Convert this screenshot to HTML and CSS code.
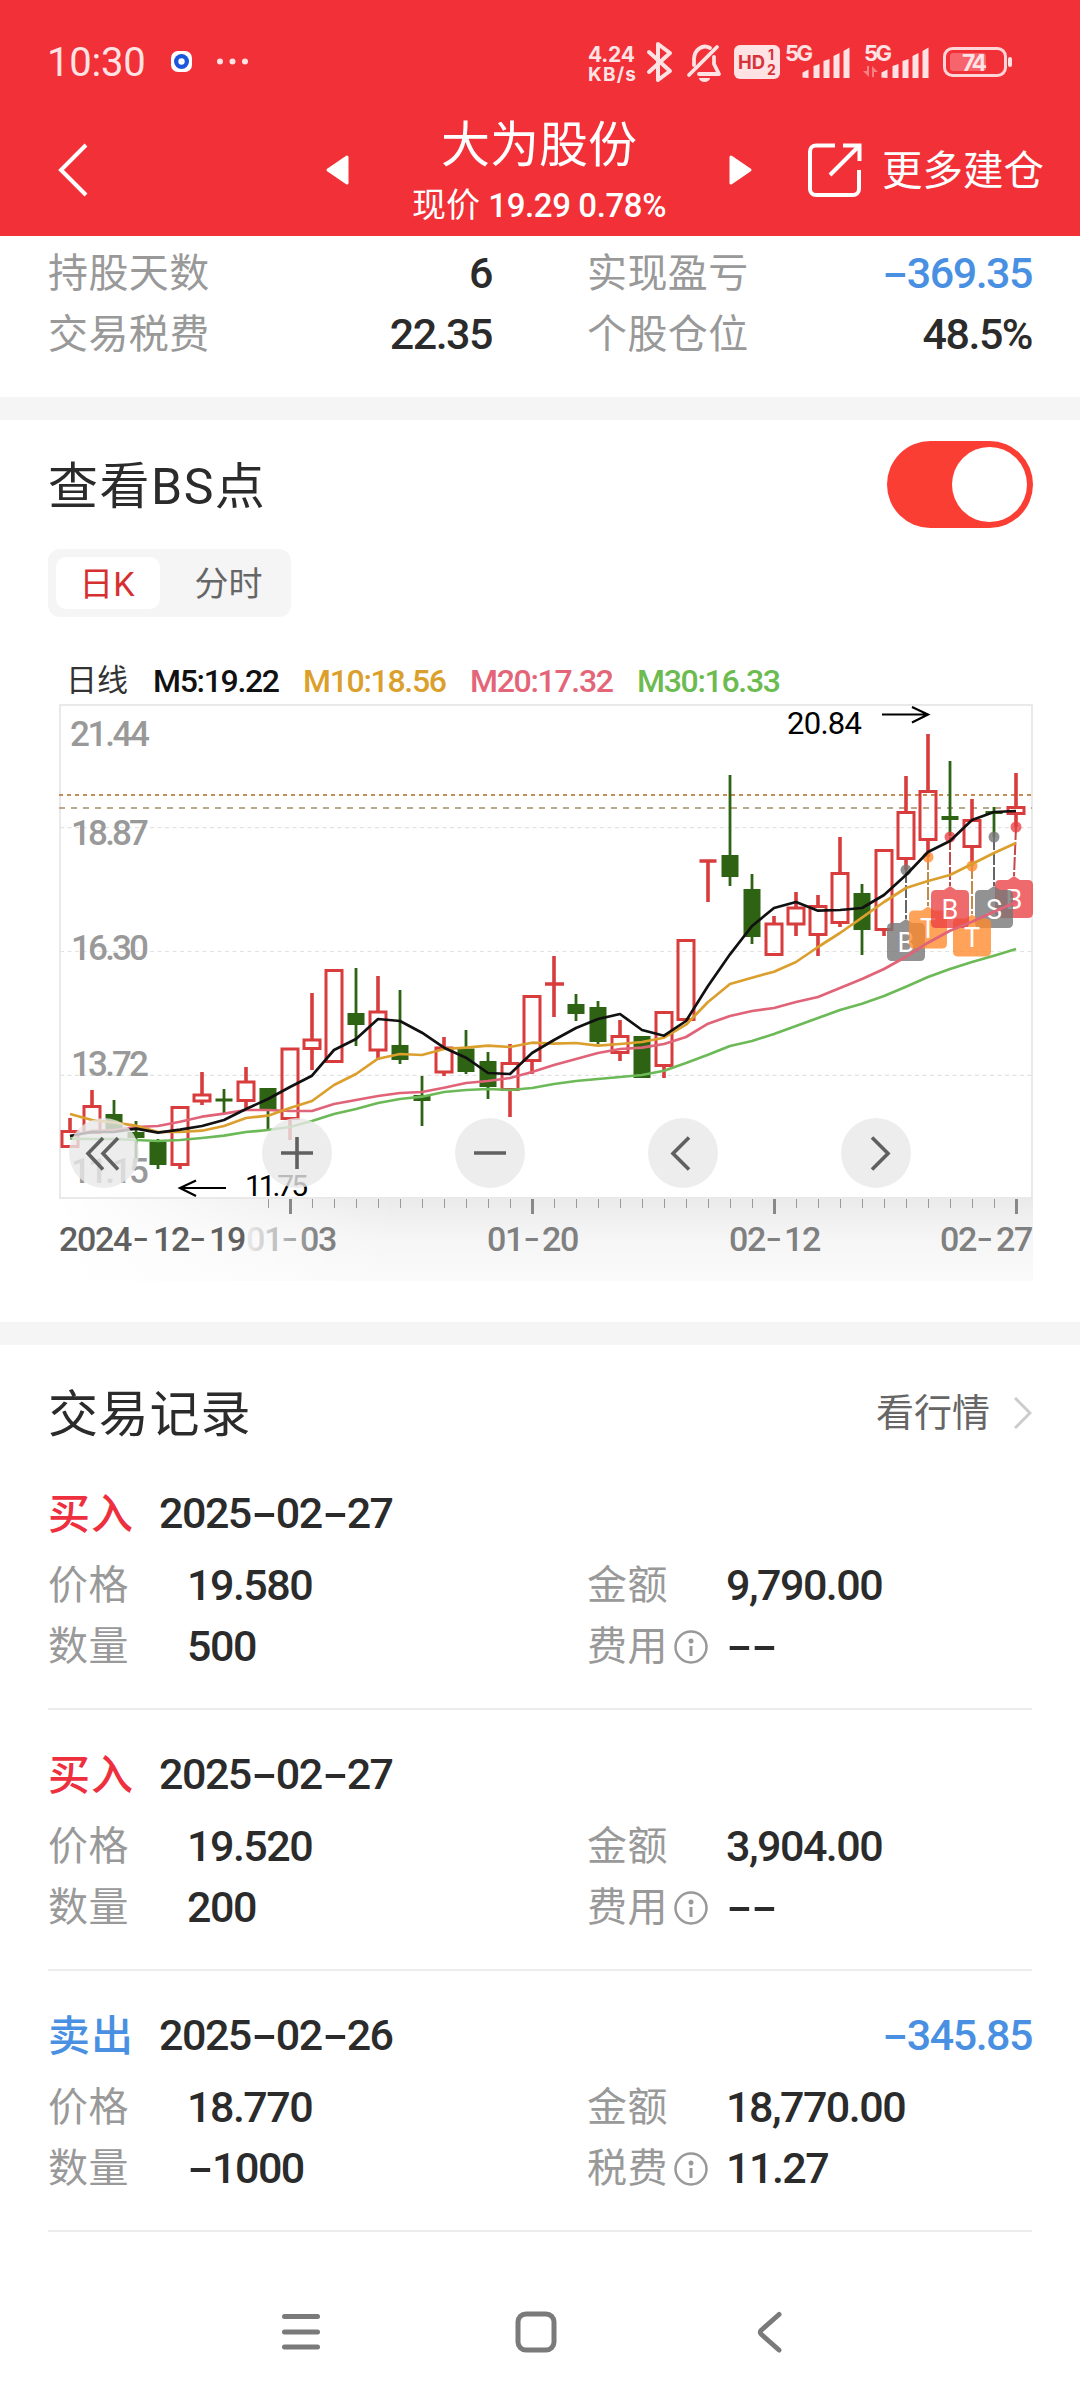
FILE: index.html
```html
<!DOCTYPE html>
<html lang="zh-CN">
<head>
<meta charset="utf-8">
<title>大为股份</title>
<link rel="stylesheet" href="styles.css">
</head>
<body>
<header class="header">
  <div class="statusbar">
    <span class="clock">10:30</span>
    <svg class="notif" width="80" height="24" viewBox="0 0 80 24">
      <rect x="0" y="1" width="21" height="21" rx="7" fill="#fff"/>
      <circle cx="10.500" cy="11.500" r="7.500" fill="#1c56dc"/>
      <circle cx="10.500" cy="11.500" r="3.200" fill="#fff"/>
      <g fill="#ffe2e3"><circle cx="49" cy="11.500" r="3"/><circle cx="61.500" cy="11.500" r="3"/><circle cx="74" cy="11.500" r="3"/></g>
    </svg>
    <svg class="signals" width="432" height="50" viewBox="584 36 432 50" fill="#ffe2e3">
      <g class="tiny">
        <text x="588" y="61" font-size="21" textLength="47">4.24</text>
        <text x="588" y="80" font-size="19" textLength="48">KB/s</text>
      </g>
      <path d="M649 51l21 19-12 9V43l12 9-21 19" fill="none" stroke="#ffe2e3" stroke-width="4" stroke-linejoin="round" stroke-linecap="round"/>
      <g fill="none" stroke="#ffe2e3" stroke-width="3.800" stroke-linecap="round" stroke-linejoin="round">
        <path d="M717 46l-28 28"/>
        <path d="M694 64V58a11 13 0 0 1 16-11"/>
        <path d="M714 56v7l5 10H699"/>
      </g>
      <path d="M699 77h11a5.500 4 0 0 1-11 0z"/>
      <rect x="734" y="44" width="46" height="34" rx="6"/>
      <g class="tiny" fill="#d8323a">
        <text x="738" y="68" font-size="19" textLength="27" lengthAdjust="spacingAndGlyphs">HD</text>
        <text x="768" y="59" font-size="14">1</text>
        <text x="767" y="74" font-size="14">2</text>
      </g>
      <g class="tiny" font-size="22"><text x="785" y="60" textLength="28">5G</text><text x="864" y="60" textLength="28">5G</text></g>
      <path d="M802.500 76.500v-5l6-3v8.500zM813.500 77V65l6-2v14zM823.500 77V60l6-2v19zM833.500 77V55l6-3v25zM843.500 77V50l6-3.500V77z"/>
      <path transform="translate(79 0)" d="M802.500 76.500v-5l6-3v8.500zM813.500 77V65l6-2v14zM823.500 77V60l6-2v19zM833.500 77V55l6-3v25zM843.500 77V50l6-3.500V77z"/>
      <path d="M869 65v11l-6-6h4v-5zM872 76V65l6 6h-4v5z" opacity=".45"/>
      <rect x="944.500" y="47.500" width="61" height="27" rx="8" fill="none" stroke="#ffd5d7" stroke-width="3"/>
      <rect x="950" y="52" width="36" height="18" rx="3" opacity=".3"/>
      <rect x="1008" y="56" width="4" height="10" rx="2"/>
      <text x="962" y="70" class="tiny" font-size="23" textLength="25">74</text>
    </svg>
  </div>
  <div class="titlebar">
    <svg class="back" width="32" height="54" viewBox="0 0 32 54" fill="none" stroke="#fff" stroke-width="4"><path d="M30 2L5 27l25 25"/></svg>
    <svg class="tri" width="24" height="30" viewBox="0 0 24 30"><path d="M21 2v26L2 15z" fill="#fff" stroke="#fff" stroke-width="3" stroke-linejoin="round"/></svg>
    <div class="name">
      <h1>大为股份</h1>
      <p>现价 <span>19.29 0.78%</span></p>
    </div>
    <svg class="tri" width="24" height="30" viewBox="0 0 24 30"><path d="M3 2v26l19-13z" fill="#fff" stroke="#fff" stroke-width="3" stroke-linejoin="round"/></svg>
    <svg class="share" width="54" height="54" viewBox="0 0 54 54" fill="none" stroke="#fff" stroke-width="4"><path d="M27 2.500H8a6 6 0 0 0-6 6V46a6 6 0 0 0 6 6h37a6 6 0 0 0 6-6V27M35 2.500h16.500V18M51 3L22 32"/></svg>
    <span class="more">更多建仓</span>
  </div>
</header>

<section class="stats">
  <span class="label">持股天数</span><span class="num end">6</span>
  <span class="label second">实现盈亏</span><span class="num end blue"><i>-</i>369.35</span>
  <span class="label">交易税费</span><span class="num end">22.35</span>
  <span class="label second">个股仓位</span><span class="num end">48.5%</span>
</section>

<section class="points">
  <div class="head">
    <h2>查看BS点</h2>
    <div class="toggle"><div class="knob"></div></div>
  </div>
  <div class="tabs"><span class="tab active">日K</span><span class="tab">分时</span></div>
  <svg class="chart" width="1080" height="640" viewBox="0 650 1080 640">
    <defs>
      <linearGradient id="shade" x1="0" y1="0" x2="0" y2="1"><stop offset="0" stop-color="#eaeaea"/><stop offset=".5" stop-color="#f6f6f6"/><stop offset="1" stop-color="#fafafa"/></linearGradient>
      <linearGradient id="fade" x1="0" y1="0" x2="1" y2="0"><stop offset="0" stop-color="#fff"/><stop offset="1" stop-color="#fff" stop-opacity="0"/></linearGradient>
      <linearGradient id="ink" gradientUnits="userSpaceOnUse" x1="246" y1="0" x2="320" y2="0"><stop offset="0" stop-color="#ececec"/><stop offset="1" stop-color="#808080"/></linearGradient>
    </defs>

    <g class="legend">
      <text x="66" y="691" class="cn" font-size="31" fill="#333">日线</text>
      <text x="153" y="692" textLength="127" fill="#111">M5:19.22</text>
      <text x="303" y="692" textLength="144" fill="#dba02b">M10:18.56</text>
      <text x="470" y="692" textLength="144" fill="#e36577">M20:17.32</text>
      <text x="637" y="692" textLength="144" fill="#6cbb50">M30:16.33</text>
    </g>

    <rect x="60" y="1198" width="973" height="83" fill="url(#shade)"/>
    <rect x="58" y="1198" width="340" height="83" fill="url(#fade)"/>
    <rect x="60" y="705" width="972" height="493" fill="#fff" stroke="#e9e9e9" stroke-width="2"/>
    <path d="M60 827.700H1032M60 951.500H1032M60 1075.300H1032" stroke="#e2e2e2" stroke-width="1.200" stroke-dasharray="4 3.500"/>
    <g class="scale">
      <text x="70" y="746" textLength="80">21.44</text>
      <text x="71" y="845" textLength="78">18.87</text>
      <text x="71" y="960" textLength="78">16.30</text>
      <text x="71" y="1076" textLength="78">13.72</text>
      <text x="71" y="1183" textLength="78">11.15</text>
    </g>
    <path d="M59 795H1032" stroke="#c58b55" stroke-width="2" stroke-dasharray="4 4"/>
    <path d="M59 808H1032" stroke="#b9a98a" stroke-width="2" stroke-dasharray="6 6"/>

    <!-- rising candles -->
    <path class="up" d="M70 1118v13M92 1090v16M180 1166v3M202 1072v23M202 1101v4M246 1067v15M246 1100v8M290 1119v21M312 993v47M312 1049v21M378 976v36M378 1050v10M444 1037v11M444 1072v4M510 1044v19M510 1090v27M532 1061v13M554 956v61M545 984h19M620 1020v16M620 1053v8M664 1066v12M708 861v41M699.500 861h17M774 916v8M796 892v16M796 924v12M818 895v11M818 935v21M840 837v36M840 923v4M884 930v6M906 776v36M906 859v11M928 734v57M928 840v17M972 799v21M972 847v19M1016 773v34M1016 814v13"/>
    <path class="upbox" d="M62 1131.500h16v15h-16zM84 1106.500h16v26h-16zM172 1107.500h16v57h-16zM194 1095h16v6h-16zM238 1082h16v18.500h-16zM282 1049h16v69.500h-16zM304 1040h16v8.500h-16zM326 970.500h16v91h-16zM370 1012h16v38h-16zM436 1048h16v24h-16zM502 1063.500h16v26h-16zM524 996.500h16v64h-16zM612 1036.500h16v16h-16zM656 1012.500h16v53h-16zM678 940.500h16v79h-16zM766 924h16v30.500h-16zM788 908h16v16h-16zM810 906.500h16v28h-16zM832 873.500h16v49h-16zM876 850.500h16v79h-16zM898 812.500h16v46h-16zM920 791.500h16v48h-16zM964 820.500h16v26h-16zM1008 807.500h16v6h-16z"/>
    <!-- falling candles -->
    <path class="down" d="M114 1100v20M136 1121v37M158 1139v30M224 1089v24M215.500 1100h17M268 1100v30M356 968v78M400 990v74M422 1076v50M466 1030v44M488 1052v47M576 994v27M598 1001v43M730 775v111M752 874v70M862 884v71M950 761v75M994 807v30M985.500 812.500h17"/>
    <path fill="#2e6313" d="M105.500 1114h17v16h-17zM127.500 1132h17v6h-17zM149.500 1142h17v23h-17zM259.500 1088h17v22h-17zM347.500 1013h17v12h-17zM391.500 1045h17v15h-17zM413.500 1095h17v6h-17zM457.500 1048.500h17v23.500h-17zM479.500 1061h17v26h-17zM567.500 1004h17v10h-17zM589.500 1007h17v35h-17zM633.500 1036h17v42h-17zM721.500 855h17v22h-17zM743.500 889h17v48h-17zM853.500 893h17v37h-17zM941.500 816h17v4h-17z"/>

    <!-- trade markers -->
    <g stroke-width="2" stroke-dasharray="13 2" fill="none">
      <path d="M906 870v49M994 837v49" stroke="#666"/>
      <path d="M928 857v49M972 866v48" stroke="#c48a4c"/>
      <path d="M950 837v49M1016 827l-2 49" stroke="#c4474a"/>
    </g>
    <g fill="#ea3c40" opacity=".76">
      <circle cx="1016" cy="827" r="5.500"/>
      <path d="M1000 880h8l6-4 6 4h8q5 0 5 5v28q0 5-5 5h-28q-5 0-5-5v-28q0-5 5-5z"/>
    </g>
    <text class="mark" x="1014" y="909">B</text>
    <g fill="#777" opacity=".8">
      <circle cx="906" cy="870" r="5.500"/><circle cx="994" cy="837" r="5.500"/>
      <path d="M892 923h8l6-4 6 4h8q5 0 5 5v28q0 5-5 5h-28q-5 0-5-5v-28q0-5 5-5z"/>
      <path d="M980 890h8l6-4 6 4h8q5 0 5 5v28q0 5-5 5h-28q-5 0-5-5v-28q0-5 5-5z"/>
    </g>
    <text class="mark" x="906" y="952">B</text>
    <g fill="#ff8a2c" opacity=".78">
      <circle cx="928" cy="857" r="5.500"/><circle cx="972" cy="866" r="5.500"/>
      <path d="M914 910.500h8l6-4 6 4h8q5 0 5 5v28q0 5-5 5h-28q-5 0-5-5v-28q0-5 5-5z"/>
      <path d="M958 918.500h8l6-4 6 4h8q5 0 5 5v28q0 5-5 5h-28q-5 0-5-5v-28q0-5 5-5z"/>
    </g>
    <text class="mark" x="928" y="938">T</text>
    <g fill="#ea3c40" opacity=".76">
      <circle cx="950" cy="837" r="5.500"/>
      <path d="M936 890h8l6-4 6 4h8q5 0 5 5v28q0 5-5 5h-28q-5 0-5-5v-28q0-5 5-5z"/>
    </g>
    <g class="mark">
      <text x="950" y="919">B</text><text x="972" y="947">T</text><text x="994" y="919">S</text>
    </g>

    <!-- moving averages: 30, 20, 10 and 5 days -->
    <g fill="none" stroke-width="2.700" stroke-linejoin="round">
      <path stroke="#6cb957" d="M70 1138.700L92 1139 114 1139 136 1140 158 1141 180 1140 202 1138 224 1135.700 246 1132 268 1130 290 1127 312 1121 334 1114 356 1109 378 1103 400 1099 422 1096.700 444 1092 466 1090 488 1089 510 1090 532 1088 554 1084 576 1081 598 1079 620 1077 642 1075 664 1070.700 686 1063 708 1054.700 730 1046 752 1041 774 1034 796 1026 818 1018 840 1010 862 1003.700 884 996 906 986.700 928 977 950 969 972 962 994 955.700 1016 949"/>
      <path stroke="#e06377" d="M70 1136L92 1131 114 1130 136 1127 158 1126 180 1121.700 202 1116.700 224 1113.700 246 1110 268 1110 290 1111 312 1111 334 1104 356 1100 378 1096 400 1093 422 1092 444 1087.700 466 1083 488 1081 510 1078 532 1072 554 1065 576 1059 598 1053 620 1049 642 1047.700 664 1044 686 1037 708 1023.700 730 1016 752 1011 774 1008 796 1002 818 997 840 988 862 979 884 969 906 956.700 928 942.700 950 930.700 972 921.700 994 911.700 1016 902"/>
      <path stroke="#db9f2d" d="M70 1114L92 1120 114 1122.700 136 1125.700 158 1132 180 1132 202 1130.700 224 1126 246 1118 268 1115.700 290 1108 312 1101 334 1085 356 1074 378 1058.700 400 1054 422 1055 444 1049 466 1047.700 488 1045.700 510 1047 532 1042.700 554 1043.700 576 1043 598 1045.700 620 1044 642 1042 664 1037.700 686 1024.700 708 1002 730 984 752 977.700 774 971.700 796 962 818 947 840 933 862 917.700 884 902 906 888 928 881 950 875 972 864 994 853 1016 843"/>
      <path stroke="#111" d="M70 1136L92 1132 114 1132 136 1128.700 158 1132.700 180 1129.700 202 1126 224 1120 246 1109 268 1099 290 1087 312 1075.700 334 1050 356 1039 378 1019 400 1021 422 1032.700 444 1047.700 466 1057.700 488 1073 510 1074 532 1053 554 1040 576 1028 598 1019 620 1014 642 1030 664 1035.700 686 1021 708 986 730 954.300 752 926 774 908 796 902 818 910.700 840 910 862 908 884 895 906 875 928 852 950 841 972 820 994 812 1016 811"/>
    </g>

    <g class="extreme">
      <text x="787" y="734" font-size="31" textLength="75">20.84</text>
      <text x="245" y="1196" font-size="30" textLength="63">11.75</text>
    </g>
    <path d="M882 714.500h46M912 707l16 7.500-16 8M226 1188h-46M196 1180.500l-16 7.500 16 8" fill="none" stroke="#000" stroke-width="2.200"/>

    <!-- time axis -->
    <path d="M268.500 1199v9M312.500 1199v9M334.500 1199v9M356.500 1199v9M378.500 1199v9M400.500 1199v9M422.500 1199v9M444.500 1199v9M466.500 1199v9M488.500 1199v9M510.500 1199v9M554.500 1199v9M576.500 1199v9M598.500 1199v9M620.500 1199v9M642.500 1199v9M664.500 1199v9M686.500 1199v9M708.500 1199v9M730.500 1199v9M752.500 1199v9M796.500 1199v9M818.500 1199v9M840.500 1199v9M862.500 1199v9M884.500 1199v9M906.500 1199v9M928.500 1199v9M950.500 1199v9M972.500 1199v9M994.500 1199v9" stroke="#999"/>
    <path d="M290.500 1199v15M532.500 1199v15M774.500 1199v15M1016.500 1199v15" stroke="#888" stroke-width="3"/>
    <g class="dates">
      <text y="1251" fill="#606060"><tspan x="59">2024</tspan><tspan class="dash" x="132">-</tspan><tspan x="153">12</tspan><tspan class="dash" x="189">-</tspan><tspan x="209">19</tspan></text>
      <text y="1251" fill="url(#ink)"><tspan x="246">01</tspan><tspan class="dash" x="281">-</tspan><tspan x="300">03</tspan></text>
      <text y="1251"><tspan x="487">01</tspan><tspan class="dash" x="523">-</tspan><tspan x="542">20</tspan></text>
      <text y="1251"><tspan x="729">02</tspan><tspan class="dash" x="765">-</tspan><tspan x="784">12</tspan></text>
      <text y="1251"><tspan x="940">02</tspan><tspan class="dash" x="976">-</tspan><tspan x="996">27</tspan></text>
    </g>

    <!-- chart controls -->
    <g fill="#e8e8e8" fill-opacity=".8"><circle cx="104" cy="1153" r="35"/><circle cx="297" cy="1153" r="35"/><circle cx="490" cy="1153" r="35"/><circle cx="683" cy="1153" r="35"/><circle cx="876" cy="1153" r="35"/></g>
    <path d="M103 1138l-15 15.500 15 16M118 1138l-15 15.500 15 16M281 1153h32M297 1137v32M474 1153h32M689 1137.500l-16 16 16 16M872 1137.500l16 16-16 16" fill="none" stroke="#606060" stroke-width="3.600"/>
  </svg>
</section>

<section class="records">
  <div class="head">
    <h2>交易记录</h2>
    <span class="link">看行情<svg width="18" height="32" viewBox="0 0 18 32" fill="none" stroke="#ccc" stroke-width="3"><path d="M1 1l15 15L1 31"/></svg></span>
  </div>

  <article class="record">
    <div class="line"><b class="buy">买入</b><span class="num">2025<i>-</i>02<i>-</i>27</span></div>
    <div class="cells">
      <span class="label">价格</span><span class="num">19.580</span><span class="label">金额</span><span class="num">9,790.00</span>
      <span class="label">数量</span><span class="num">500</span><span class="label">费用<svg class="info" width="34" height="34" viewBox="0 0 34 34"><circle cx="17" cy="17" r="15.500" fill="none" stroke="#999" stroke-width="2.500"/><circle cx="17" cy="11" r="2.500" fill="#999"/><path d="M17 16v10" stroke="#999" stroke-width="3"/></svg></span><span class="num"><i>-</i><i>-</i></span>
    </div>
  </article>

  <article class="record">
    <div class="line"><b class="buy">买入</b><span class="num">2025<i>-</i>02<i>-</i>27</span></div>
    <div class="cells">
      <span class="label">价格</span><span class="num">19.520</span><span class="label">金额</span><span class="num">3,904.00</span>
      <span class="label">数量</span><span class="num">200</span><span class="label">费用<svg class="info" width="34" height="34" viewBox="0 0 34 34"><circle cx="17" cy="17" r="15.500" fill="none" stroke="#999" stroke-width="2.500"/><circle cx="17" cy="11" r="2.500" fill="#999"/><path d="M17 16v10" stroke="#999" stroke-width="3"/></svg></span><span class="num"><i>-</i><i>-</i></span>
    </div>
  </article>

  <article class="record">
    <div class="line"><b class="sell">卖出</b><span class="num">2025<i>-</i>02<i>-</i>26</span><span class="num blue profit"><i>-</i>345.85</span></div>
    <div class="cells">
      <span class="label">价格</span><span class="num">18.770</span><span class="label">金额</span><span class="num">18,770.00</span>
      <span class="label">数量</span><span class="num"><i>-</i>1000</span><span class="label">税费<svg class="info" width="34" height="34" viewBox="0 0 34 34"><circle cx="17" cy="17" r="15.500" fill="none" stroke="#999" stroke-width="2.500"/><circle cx="17" cy="11" r="2.500" fill="#999"/><path d="M17 16v10" stroke="#999" stroke-width="3"/></svg></span><span class="num">11.27</span>
    </div>
  </article>
</section>

<nav class="sysnav">
  <svg width="40" height="44" viewBox="0 0 40 44" stroke="#7a7a7a" stroke-width="5" stroke-linecap="round"><path d="M3.500 6.500h33M3.500 22h33M3.500 37h33"/></svg>
  <svg class="home" width="44" height="44" viewBox="0 0 44 44" fill="none" stroke="#7a7a7a" stroke-width="5"><rect x="4" y="4" width="36" height="36" rx="8"/></svg>
  <svg width="28" height="44" viewBox="0 0 28 44" fill="none" stroke="#7a7a7a" stroke-width="5" stroke-linecap="round" stroke-linejoin="round"><path d="M24 4.500L6.500 20q-2.500 2 0 4.500L24 40"/></svg>
</nav>
</body>
</html>
```
FILE: styles.css
```css
* { box-sizing: border-box; }
body {
  margin: 0;
  width: 1080px;
  height: 2400px;
  background: #fff;
  color: #2b2b2b;
  font-family: Roboto, "Noto Sans CJK SC", sans-serif;
  overflow: hidden;
}
h1, h2, p { margin: 0; font-weight: 400; }
svg { display: block; flex: none; }
i {
  display: inline-block;
  width: 25px;
  text-align: center;
  font-style: normal;
  font-family: Inter, sans-serif;
  line-height: 1;
  transform: scaleX(1.4);
}

.header { height: 236px; background: #f13037; color: #fff; }
.statusbar { height: 106px; padding: 18px 64px 0 47px; display: flex; align-items: center; }
.clock { font-size: 40px; letter-spacing: -0.2px; color: #ffe2e3; width: 124px; white-space: nowrap; }
.signals { margin-left: auto; }
.tiny { font-weight: 700; font-family: Inter, sans-serif; }
.titlebar { height: 130px; padding: 0 34px 2px 56px; display: flex; align-items: center; }
.back { margin-right: 238px; }
.tri { margin-bottom: 1px; }
.name { width: 378px; text-align: center; padding-top: 4px; }
.name h1 { font-size: 49px; line-height: 66px; }
.name p { font-size: 34px; line-height: 52px; white-space: pre; }
.name p span { font-weight: 500; font-size: 33px; letter-spacing: -0.4px; }
.share { margin-left: 56px; margin-right: 20px; }
.more { font-size: 40.500px; white-space: nowrap; line-height: 60px; padding-top: 2px; }

.stats {
  height: 161px;
  padding: 7px 48px 0;
  display: grid;
  grid-template-columns: 200px 244px 296px 244px;
  grid-template-rows: 61px 61px;
  align-items: center;
}
.second { padding-left: 95px; }
.label { font-size: 40px; line-height: 58px; letter-spacing: .4px; color: #999; white-space: nowrap; display: flex; align-items: center; }
.num { font-size: 43px; font-weight: 500; letter-spacing: -1.5px; white-space: nowrap; line-height: 58px; padding-bottom: 2px; }
.end { text-align: right; }
.blue { color: #4a90e2; }

.points { border-top: 23px solid #f5f5f5; height: 925px; }
.head { display: flex; align-items: center; justify-content: space-between; padding: 0 48px; }
.points .head { height: 129px; padding-right: 47px; }
.head h2 { font-size: 50px; letter-spacing: .8px; padding-bottom: 6px; }
.points h2 { letter-spacing: 1.5px; }
.toggle { width: 146px; height: 87px; border-radius: 44px; background: #fb3e34; padding: 6px; display: flex; justify-content: flex-end; }
.knob { width: 75px; height: 75px; border-radius: 50%; background: #fff; }
.tabs { margin-left: 48px; width: 243px; height: 68px; padding: 8px; background: #f5f5f5; border-radius: 12px; display: flex; }
.tab { flex: 1 0 0; display: flex; align-items: center; justify-content: center; font-size: 34px; color: #666; padding: 0 0 3px 14px; }
.tab.active { flex: 0 0 104px; padding: 0 2px 3px 0; background: #fff; border-radius: 10px; color: #d5302f; }
.chart { margin-top: 33px; }
.legend { font-size: 32px; font-weight: 500; }
.cn { font-weight: 400; }
.scale { font-size: 35px; fill: #999; font-weight: 500; }
.extreme { fill: #000; }
.dates { font-size: 34px; fill: #808080; font-weight: 500; letter-spacing: -1.3px; }
.dash { font-family: Inter, sans-serif; font-size: 38px; font-weight: 400; }
.up { fill: none; stroke: #d83c3c; stroke-width: 3.600; }
.upbox { fill: none; stroke: #d83c3c; stroke-width: 3; }
.down { fill: none; stroke: #2e6313; stroke-width: 2.800; }
.mark { fill: #fff; font-size: 27px; text-anchor: middle; font-family: Roboto, sans-serif; }

.records { border-top: 23px solid #f5f5f5; }
.records .head { height: 127px; padding-top: 9px; }
.link { display: flex; align-items: center; gap: 24px; font-size: 38px; line-height: 50px; color: #666; }
.record { margin: 0 48px; height: 261px; border-bottom: 2px solid #ededed; }
.records .head + .record { height: 238px; }
.line { display: flex; align-items: center; height: 83px; }
.line b { font-weight: 500; font-size: 42px; letter-spacing: 1px; width: 111px; padding-bottom: 6px; white-space: nowrap; }
.buy { color: #ee2f3e; }
.sell { color: #4a90e2; }
.profit { margin-left: auto; }
.cells { display: grid; grid-template-columns: 139px 400px 139px 1fr; grid-template-rows: 61px 61px; align-items: center; }
.record + .record { padding-top: 23px; }
.info { margin-left: 6px; }

.sysnav { height: 200px; display: flex; padding: 78px 0 0 281px; }
.home { margin: 0 197px 0 193px; }
```
